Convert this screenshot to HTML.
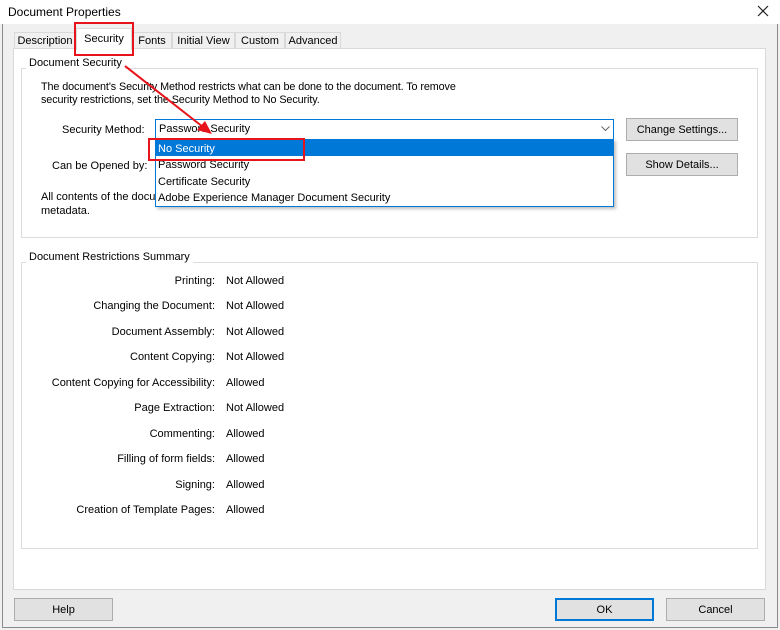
<!DOCTYPE html>
<html><head><style>
*{box-sizing:border-box;margin:0;padding:0}
body{width:780px;height:630px;background:#f0f0f0;font-family:"Liberation Sans",sans-serif;font-size:11px;color:#000;position:relative;overflow:hidden}
.a{position:absolute;white-space:nowrap}
.btn{position:absolute;background:#e1e1e1;border:1px solid #adadad;text-align:center;line-height:22px}
.tab{position:absolute;top:32px;height:17px;border:1px solid #d9d9d9;border-bottom:none;background:#f0f0f0;line-height:16px;text-align:center}
.grp{position:absolute;border:1px solid #dcdcdc}
.lbl{position:absolute;text-align:right;width:215px;left:0}
.t{letter-spacing:-0.1px}
</style></head><body>
<div class="a" style="left:0;top:0;width:780px;height:24px;background:#fff"></div>
<div class="a" style="left:8px;top:5px;font-size:12px">Document Properties</div>
<svg class="a" style="left:757px;top:5px" width="12" height="12"><path d="M1 1L11 11M11 1L1 11" stroke="#222" stroke-width="1.2"/></svg>
<div class="a" style="left:2px;top:24px;width:1px;height:604px;background:#8a8a8a"></div>
<div class="a" style="left:2px;top:627px;width:776px;height:1px;background:#8a8a8a"></div>
<div class="a" style="left:777px;top:24px;width:1px;height:604px;background:#8a8a8a"></div>

<div class="tab" style="left:14px;width:62px">Description</div>
<div class="tab" style="left:132px;width:40px">Fonts</div>
<div class="tab" style="left:172px;width:63px">Initial View</div>
<div class="tab" style="left:235px;width:50px">Custom</div>
<div class="tab" style="left:285px;width:56px">Advanced</div>
<div class="a" style="left:13px;top:48px;width:753px;height:542px;background:#fff;border:1px solid #d9d9d9"></div>
<div class="tab" style="left:76px;top:28px;width:56px;height:22px;background:#fff;line-height:20px;border-color:#d9d9d9">Security</div>

<div class="grp" style="left:21px;top:68px;width:737px;height:170px"></div>
<div class="a" style="left:26px;top:57px;background:#fff;padding:0 3px">Document Security</div>
<div class="a t" style="left:41px;top:81px;line-height:13px;font-size:10.8px">The document's Security Method restricts what can be done to the document. To remove<br>security restrictions, set the Security Method to No Security.</div>
<div class="a" style="left:62px;top:124px">Security Method:</div>
<div class="a" style="left:52px;top:160px">Can be Opened by:</div>
<div class="a" style="left:41px;top:190px;line-height:14px">All contents of the docu<br>metadata.</div>
<div class="btn" style="left:626px;top:118px;width:112px;height:23px">Change Settings...</div>
<div class="btn" style="left:626px;top:153px;width:112px;height:23px">Show Details...</div>

<div class="a" style="left:155px;top:119px;width:459px;height:21px;border:1px solid #0078d7;background:#fff"></div>
<div class="a" style="left:159px;top:123px">Password Security</div>
<svg class="a" style="left:601px;top:126px" width="9" height="6"><path d="M0.5 0.5L4.5 4.5L8.5 0.5" stroke="#666" fill="none"/></svg>
<div class="a" style="left:155px;top:139px;width:459px;height:68px;border:1px solid #0078d7;background:#fff;box-shadow:2px 2px 3px rgba(0,0,0,.25)"></div>
<div class="a" style="left:156px;top:140px;width:457px;height:16px;background:#0078d7"></div>
<div class="a" style="left:158px;top:143px;color:#fff">No Security</div>
<div class="a" style="left:158px;top:159px">Password Security</div>
<div class="a" style="left:158px;top:176px">Certificate Security</div>
<div class="a" style="left:158px;top:192px">Adobe Experience Manager Document Security</div>

<div class="grp" style="left:21px;top:262px;width:737px;height:287px"></div>
<div class="a" style="left:26px;top:251px;background:#fff;padding:0 3px">Document Restrictions Summary</div>
<div class="lbl" style="top:275px">Printing:</div><div class="a" style="left:226px;top:275px">Not Allowed</div>
<div class="lbl" style="top:300px">Changing the Document:</div><div class="a" style="left:226px;top:300px">Not Allowed</div>
<div class="lbl" style="top:326px">Document Assembly:</div><div class="a" style="left:226px;top:326px">Not Allowed</div>
<div class="lbl" style="top:351px">Content Copying:</div><div class="a" style="left:226px;top:351px">Not Allowed</div>
<div class="lbl" style="top:377px">Content Copying for Accessibility:</div><div class="a" style="left:226px;top:377px">Allowed</div>
<div class="lbl" style="top:402px">Page Extraction:</div><div class="a" style="left:226px;top:402px">Not Allowed</div>
<div class="lbl" style="top:428px">Commenting:</div><div class="a" style="left:226px;top:428px">Allowed</div>
<div class="lbl" style="top:453px">Filling of form fields:</div><div class="a" style="left:226px;top:453px">Allowed</div>
<div class="lbl" style="top:479px">Signing:</div><div class="a" style="left:226px;top:479px">Allowed</div>
<div class="lbl" style="top:504px">Creation of Template Pages:</div><div class="a" style="left:226px;top:504px">Allowed</div>

<div class="btn" style="left:14px;top:598px;width:99px;height:23px">Help</div>
<div class="btn" style="left:555px;top:598px;width:99px;height:23px;border:2px solid #0078d7;line-height:20px">OK</div>
<div class="btn" style="left:666px;top:598px;width:99px;height:23px">Cancel</div>

<div class="a" style="left:74px;top:22px;width:60px;height:34px;border:2px solid #e8141b"></div>
<div class="a" style="left:148px;top:138px;width:157px;height:23px;border:2px solid #e8141b"></div>
<svg class="a" style="left:0;top:0" width="780" height="630"><line x1="125" y1="66" x2="203" y2="127" stroke="#e8141b" stroke-width="2"/><polygon points="212,134 197,130 205,121" fill="#e8141b"/></svg>
</body></html>
